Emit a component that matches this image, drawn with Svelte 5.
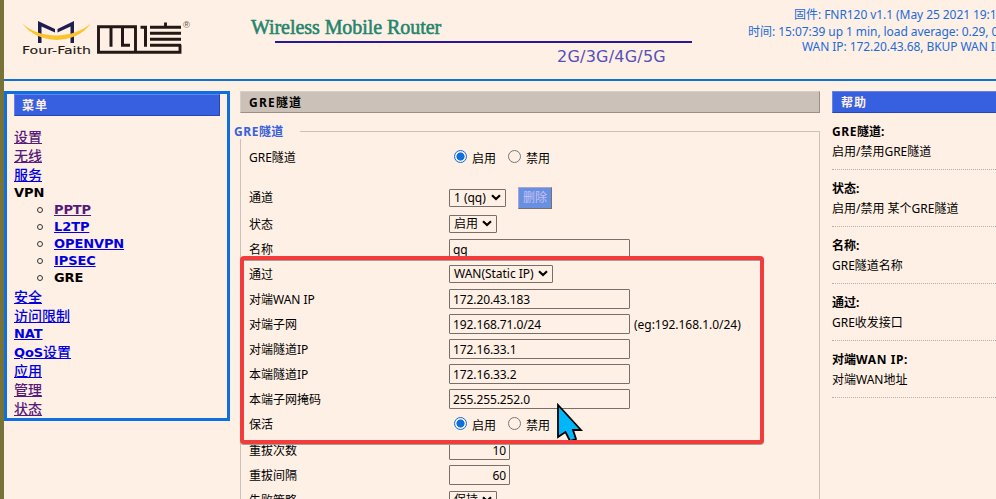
<script>
  const menu = [
    { t: '设置', h: 19, k: 'seen' },
    { t: '无线', h: 19, k: 'seen' },
    { t: '服务', h: 19, k: 'link' },
    { t: 'VPN', h: 17, k: 'plain' },
    { t: 'PPTP', h: 17, k: 'seen', sub: true },
    { t: 'L2TP', h: 17, k: 'link', sub: true },
    { t: 'OPENVPN', h: 17, k: 'link', sub: true },
    { t: 'IPSEC', h: 17, k: 'link', sub: true },
    { t: 'GRE', h: 18, k: 'plain', sub: true },
    { t: '安全', h: 19, k: 'link' },
    { t: '访问限制', h: 19, k: 'link' },
    { t: 'NAT', h: 17, k: 'link' },
    { t: 'QoS设置', h: 19, k: 'link' },
    { t: '应用', h: 19, k: 'link' },
    { t: '管理', h: 19, k: 'seen' },
    { t: '状态', h: 19, k: 'seen' }
  ];
  const rows = [
    { t: 'GRE隧道', h: 31, kind: 'radio' },
    { t: '通道', h: 40, kind: 'select', v: '1 (qq)', w: 57, del: true },
    { t: '状态', h: 26, kind: 'select', v: '启用', w: 48 },
    { t: '名称', h: 25, kind: 'input', v: 'qq' },
    { t: '通过', h: 25, kind: 'select', v: 'WAN(Static IP)', w: 104 },
    { t: '对端WAN IP', h: 25, kind: 'input', v: '172.20.43.183' },
    { t: '对端子网', h: 25, kind: 'input', v: '192.168.71.0/24', note: '(eg:192.168.1.0/24)' },
    { t: '对端隧道IP', h: 25, kind: 'input', v: '172.16.33.1' },
    { t: '本端隧道IP', h: 25, kind: 'input', v: '172.16.33.2' },
    { t: '本端子网掩码', h: 25, kind: 'input', v: '255.255.252.0' },
    { t: '保活', h: 25, kind: 'radio' },
    { t: '重拔次数', h: 26, kind: 'num', v: '10' },
    { t: '重拔间隔', h: 25, kind: 'num', v: '60' },
    { t: '失败策略', h: 25, kind: 'select', v: '保持', w: 48 }
  ];
  const help = [
    ['GRE隧道:', '启用/禁用GRE隧道'],
    ['状态:', '启用/禁用 某个GRE隧道'],
    ['名称:', 'GRE隧道名称'],
    ['通过:', 'GRE收发接口'],
    ['对端WAN IP:', '对端WAN地址']
  ];
  // Splits a label into Latin and Chinese runs so each gets its own tracking.
  const runs = (s) => s.match(/[\u3400-\u9fff]+|[^\u3400-\u9fff]+/g) ?? [];
  const isHan = (s) => /[\u3400-\u9fff]/.test(s);
</script>

{#snippet mix(s)}{#each runs(s) as r}<span class={isHan(r) ? 'han' : 'lat'}>{r}</span>{/each}{/snippet}

<div class="page">
  <div class="strip"></div>
  <div class="main">
    <header>
      <svg class="logo" width="174" height="42" viewBox="20 18 174 42">
        <path d="M38 43V21L55 29V32.500L41.500 26.500V43ZM74 43V21L57.500 29V32.500L70.500 26.500V43Z" fill="#1d1e50" />
        <path d="M22 23C38 39.500 74 39.500 91 23C76 45.500 38 45.500 22 23Z" fill="#fcc32c" />
        <text x="22" y="54" textLength="69" lengthAdjust="spacingAndGlyphs" class="brand">Four-Faith</text>
        <g fill="none" stroke="#231815">
          <path d="M180 44.700V52.300H98.500V26.700H135.500V52.500" stroke-width="2.900" />
          <path d="M111 27V46.800M122.500 27V45.200H130M140.500 27.200H145.500V46.800" stroke-width="3" />
          <path d="M150 27.200H181M165.500 22.500V27M150 33.200H181M150 39.200H181M150 45.300H181" stroke-width="2.900" />
        </g>
        <text x="183" y="28" class="reg">®</text>
      </svg>
      <div class="title">
        <div class="name">Wireless Mobile Router</div>
        <div class="rule"></div>
        <div class="gens">2G/3G/4G/5G</div>
      </div>
      <div class="info">
        <div class="i1">{@render mix('固件: FNR120 v1.1 (May 25 2021 19:1')}</div>
        <div class="i2">{@render mix('时间: 15:07:39 up 1 min, load average: 0.29, 0')}</div>
        <div class="i3">{@render mix('WAN IP: 172.20.43.68, BKUP WAN IP')}</div>
      </div>
    </header>

    <div class="columns">
      <nav>
        <h2 class="bar blue">{@render mix('菜单')}</h2>
        <div class="items">
          {#each menu as m}
            <div class="item" class:sub={m.sub} style:height="{m.h}px">
              {#if m.sub}<i class="dot"></i>{/if}
              <span class={m.k}>{@render mix(m.t)}</span>
            </div>
          {/each}
        </div>
      </nav>

      <main>
        <h2 class="bar gray">{@render mix('GRE隧道')}</h2>
        <section class="field">
          <div class="legend">{@render mix('GRE隧道')}</div>
          <div class="rows">
            {#each rows as r}
              <div class="row" style:height="{r.h}px">
                <div class="label">{@render mix(r.t)}</div>
                <div class="control">
                  {#if r.kind === 'radio'}
                    <i class="radio on"></i><span class="opt">启用</span>
                    <i class="radio"></i><span class="opt">禁用</span>
                  {:else if r.kind === 'select'}
                    <div class="select" style:width="{r.w}px">
                      <span>{@render mix(r.v)}</span>
                      <svg width="10" height="7" viewBox="0 0 10 7"><path d="M1 1.200L5 5L9 1.200" fill="none" stroke="#000" stroke-width="2.200" /></svg>
                    </div>
                    {#if r.del}<div class="del">删除</div>{/if}
                  {:else}
                    <input class:num={r.kind === 'num'} type="text" value={r.v} />
                    {#if r.note}<span class="note">{@render mix(r.note)}</span>{/if}
                  {/if}
                </div>
              </div>
            {/each}
          </div>
        </section>
      </main>

      <aside>
        <h2 class="bar blue">{@render mix('帮助')}</h2>
        {#each help as [q, a]}
          <div class="tip">
            <b>{@render mix(q)}</b>
            <p>{@render mix(a)}</p>
          </div>
        {/each}
      </aside>
    </div>
  </div>

  <svg class="pointer" width="32" height="38" viewBox="0 0 32 38">
    <path d="M2 2L2 34L9.500 29L14 38L20 36L17 27H25Z" fill="#00b7fc" stroke="#000" stroke-width="1.800" />
  </svg>
  <div class="highlight"></div>
</div>

<style>
  :global(body) { background: #fff0e5; overflow: hidden; }
  .page {
    position: relative; display: flex; width: 996px; height: 499px; overflow: hidden;
    background: #fff0e5; color: #000;
    font: 12px/16px "Noto Sans", "Noto Sans CJK SC", sans-serif;
  }
  .lat { letter-spacing: -0.03px; white-space: pre; }
  .han { font-family: "Noto Sans CJK SC", sans-serif; }
  .strip { width: 4px; background: #777238; flex: none; }
  .main { width: 992px; flex: none; }
  header { display: flex; height: 79px; border-bottom: 2px solid #0d6fe0; }
  .logo { margin: 18px 0 0 16px; flex: none; }
  .brand { font: 11px "DejaVu Sans", sans-serif; fill: #231815; stroke: #231815; stroke-width: .1; }
  .reg { font: 9.5px "Liberation Sans", sans-serif; fill: #5d504b; }
  .title { margin-left: 57px; width: 441px; flex: none; }
  .name {
    font: 20px/22px "Liberation Serif", serif; color: #24846d; -webkit-text-stroke: .55px #24846d;
    margin-top: 16px; letter-spacing: -.06px; white-space: nowrap;
  }
  .rule { height: 2px; background: #2a189b; margin: 3px 0 0 24px; width: 417px; }
  .gens { font: 16px/20px "DejaVu Sans", sans-serif; color: #5550b8; margin: 4px 0 0 306px; letter-spacing: .22px; }
  .info { color: #1b6bd8; white-space: nowrap; padding-top: 6px; margin-left: 56px; }
  .info .lat { letter-spacing: -.07px; }
  .i1 { margin-left: 46px; }
  .i2 { margin-left: 0; }
  .i3 { margin-left: 54px; line-height: 14px; }
  .columns { display: flex; margin-top: 10px; align-items: flex-start; }
  nav { box-sizing: border-box; width: 226px; height: 330px; border: 3px solid #0d6fe0; padding: 0 7px; flex: none; }
  .bar {
    box-sizing: border-box; height: 22px; margin: 0; padding-left: 8px; border: 1px solid;
    font-size: 12px; line-height: 20px; font-weight: 700;
  }
  .bar .lat { letter-spacing: 1.2px; }
  .bar .han { letter-spacing: 1px; }
  .blue { background: #3660e0; color: #fff0e5; border-color: #6484e6 #2646b4 #2646b4 #6484e6; }
  .gray { background: #cbc1b8; border-color: #d8cec6 #99908a #99908a #d8cec6; }
  nav .bar { padding-left: 7px; }
  .items { padding-top: 11px; }
  .item {
    display: flex; align-items: center; white-space: nowrap;
    font: 700 13px/16px "DejaVu Sans", "Noto Sans CJK SC", sans-serif;
  }
  .item .lat { letter-spacing: -.1px; }
  .item .han { font-size: 14px; font-weight: 500; }
  .item span { text-decoration-thickness: 1px; text-underline-offset: 1px; }
  .sub { padding-left: 23px; }
  .dot { width: 4px; height: 4px; border: 1px solid #333; border-radius: 50%; margin-right: 11px; }
  .link { color: #0000e0; text-decoration: underline; }
  .seen { color: #551a7b; text-decoration: underline; }
  main { width: 580px; margin-left: 10px; flex: none; }
  .field {
    box-sizing: border-box; margin-top: 18px; height: 400px; width: 580px;
    border: 1px solid #cbc1b8;
  }
  .legend {
    width: 66px; height: 16px; margin: -9px 0 0 -7px; background: #fff0e5; color: #3660e0;
    font-weight: 700; line-height: 15px;
  }
  .legend .lat, .tip b .lat { letter-spacing: .6px; }
  .legend .han { letter-spacing: .2px; }
  .rows { padding-left: 8px; }
  .row { display: flex; align-items: flex-end; }
  .label { width: 200px; height: 25px; line-height: 24px; white-space: nowrap; flex: none; }
  .row:nth-child(n+3) .label { line-height: 26px; }
  .control { display: flex; align-items: center; height: 25px; }
  .radio { box-sizing: border-box; width: 13px; height: 13px; border: 1px solid #767676; border-radius: 50%; margin: 0 5px 2px 5px; }
  .row:nth-child(n+3) .radio { margin-bottom: 1px; }
  .radio.on { border-color: #0d6fe0; background: radial-gradient(circle, #0d6fe0 0 3.800px, transparent 4.300px); }
  .opt { margin: 2px 7px 0 0; }
  .row:nth-child(n+3) .opt { margin-top: 4px; }
  .select {
    box-sizing: border-box; height: 18px; border: 1px solid #766f6a; border-radius: 1px; line-height: 16px;
    display: flex; align-items: center; justify-content: space-between; padding: 0 4px; white-space: nowrap;
  }
  .del {
    box-sizing: border-box; width: 34px; height: 22px; margin-left: 12px; background: #6790e2; color: #c9c0ef;
    border: 1px solid; border-color: #aaa7ce #77716d #77716d #aaa7ce; line-height: 20px; text-align: center;
  }
  input {
    box-sizing: border-box; width: 181px; height: 20px; margin: 0; padding: 1px 3px 0; border: 1px solid #766f6a;
    border-radius: 1px; background: transparent; font: 12px "Noto Sans", sans-serif; letter-spacing: -.1px; color: #000; outline: none;
  }
  .num { width: 61px; text-align: right; }
  .note { margin: 2px 0 0 4px; }
  aside { width: 180px; margin-left: 12px; flex: none; }
  .tip { box-sizing: border-box; height: 57px; padding-top: 10px; border-bottom: 1px dotted #b9afa7; white-space: nowrap; }
  .tip b { display: block; line-height: 16px; }
  .tip p { margin: 3px 0 0; }
  .highlight {
    box-sizing: border-box; position: absolute; left: 240px; top: 256px; width: 524px; height: 188px;
    border: 4px solid #f23c3c; border-radius: 4px; filter: drop-shadow(0 1px 0 #a89d96);
  }
  .pointer { position: absolute; left: 556px; top: 403px; }
</style>
